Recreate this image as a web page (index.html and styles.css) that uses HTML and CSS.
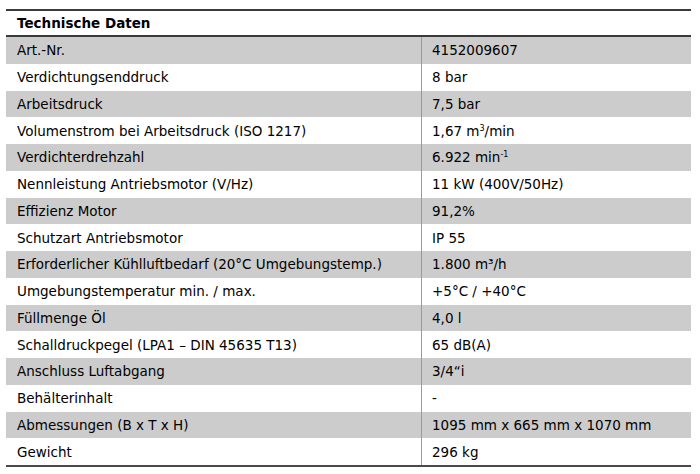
FILE: index.html
```html
<!DOCTYPE html>
<html lang="de">
<head>
<meta charset="utf-8">
<title>Technische Daten</title>
<link rel="stylesheet" href="styles.css">
</head>
<body>
<div class="specs">
  <div class="head">Technische Daten</div>
  <div class="row alt"><div class="k">Art.-Nr.</div><div class="v">4152009607</div></div>
  <div class="row"><div class="k">Verdichtungsenddruck</div><div class="v">8 bar</div></div>
  <div class="row alt"><div class="k">Arbeitsdruck</div><div class="v">7,5 bar</div></div>
  <div class="row"><div class="k">Volumenstrom bei Arbeitsdruck (ISO 1217)</div><div class="v">1,67 m<sup class="sup">3</sup>/min</div></div>
  <div class="row alt"><div class="k">Verdichterdrehzahl</div><div class="v">6.922 min<sup class="sup">-1</sup></div></div>
  <div class="row"><div class="k">Nennleistung Antriebsmotor (V/Hz)</div><div class="v">11 kW (400V/50Hz)</div></div>
  <div class="row alt"><div class="k">Effizienz Motor</div><div class="v">91,2%</div></div>
  <div class="row"><div class="k">Schutzart Antriebsmotor</div><div class="v">IP 55</div></div>
  <div class="row alt"><div class="k">Erforderlicher Kühlluftbedarf (20°C Umgebungstemp.)</div><div class="v">1.800 m³/h</div></div>
  <div class="row"><div class="k">Umgebungstemperatur min. / max.</div><div class="v">+5°C / +40°C</div></div>
  <div class="row alt"><div class="k">Füllmenge Öl</div><div class="v">4,0 l</div></div>
  <div class="row"><div class="k">Schalldruckpegel (LPA1 – DIN 45635 T13)</div><div class="v">65 dB(A)</div></div>
  <div class="row alt"><div class="k">Anschluss Luftabgang</div><div class="v">3/4“i</div></div>
  <div class="row"><div class="k">Behälterinhalt</div><div class="v">-</div></div>
  <div class="row alt"><div class="k">Abmessungen (B x T x H)</div><div class="v">1095 mm x 665 mm x 1070 mm</div></div>
  <div class="row"><div class="k">Gewicht</div><div class="v">296 kg</div></div>
</div>
</body>
</html>
```
FILE: styles.css
```css
html, body {
  margin: 0;
  padding: 0;
  background: #ffffff;
}
body {
  font-family: "DejaVu Sans", Verdana, sans-serif;
  font-size: 13.5px;
  color: #000000;
}
.specs {
  margin: 9px 0 0 6px;
  width: 685px;
  border-top: 2px solid #3a3a3a;
  border-bottom: 2px solid #4a4a4a;
}
.head {
  height: 24px;
  line-height: 24px;
  padding-left: 11px;
  font-weight: bold;
  border-bottom: 2px solid #3a3a3a;
}
.row {
  display: flex;
  height: 26.75px;
  align-items: center;
}
.row.alt {
  background: #cccccc;
}
.k {
  width: 404px;
  padding-left: 11px;
  height: 100%;
  display: flex;
  align-items: center;
  border-right: 1px solid #9a9a9a;
}
.v {
  padding-left: 10px;
  flex: 1;
}
.sup {
  font-size: 8px;
  vertical-align: 5px;
  line-height: 0;
}
```
